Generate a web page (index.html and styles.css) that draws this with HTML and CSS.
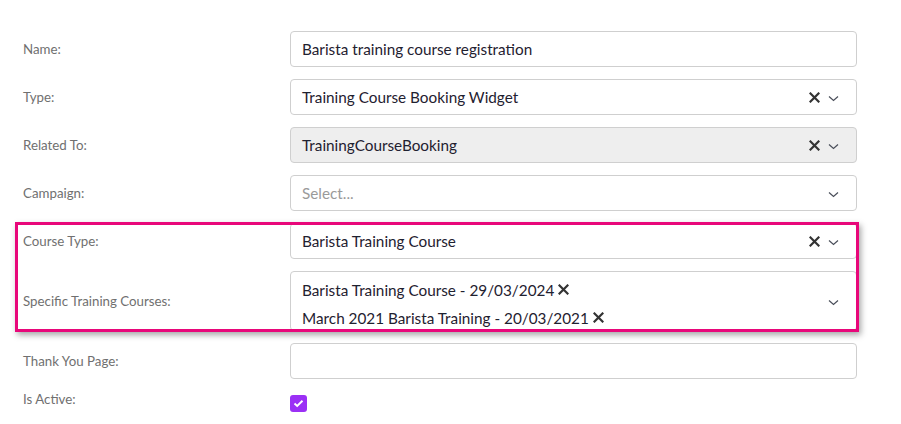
FILE: index.html
```html
<!DOCTYPE html>
<html>
<head>
<meta charset="utf-8">
<link rel="stylesheet" href="styles.css">
</head>
<body>
<div class="page">
  <form class="form">
    <div class="row">
      <label class="label">Name:</label>
      <div class="field"><span class="value">Barista training course registration</span></div>
    </div>
    <div class="row">
      <label class="label">Type:</label>
      <div class="field select"><span class="value">Training Course Booking Widget</span>
        <span class="icons">
          <svg class="clear" width="11" height="11" viewBox="0 0 11 11"><path d="M1.5 1.5L9.5 9.5M9.5 1.5L1.5 9.5" stroke="#333" stroke-width="2.2" stroke-linecap="square"/></svg>
          <svg class="chev" width="11" height="7" viewBox="0 0 11 7"><path d="M1 1.5L5.5 5.5L10 1.5" fill="none" stroke="#4a4f5a" stroke-width="1.2"/></svg>
        </span>
      </div>
    </div>
    <div class="row">
      <label class="label">Related To:</label>
      <div class="field select disabled"><span class="value">TrainingCourseBooking</span>
        <span class="icons">
          <svg class="clear" width="11" height="11" viewBox="0 0 11 11"><path d="M1.5 1.5L9.5 9.5M9.5 1.5L1.5 9.5" stroke="#333" stroke-width="2.2" stroke-linecap="square"/></svg>
          <svg class="chev" width="11" height="7" viewBox="0 0 11 7"><path d="M1 1.5L5.5 5.5L10 1.5" fill="none" stroke="#4a4f5a" stroke-width="1.2"/></svg>
        </span>
      </div>
    </div>
    <div class="row">
      <label class="label">Campaign:</label>
      <div class="field select"><span class="value placeholder">Select...</span>
        <span class="icons">
          <svg class="chev" width="11" height="7" viewBox="0 0 11 7"><path d="M1 1.5L5.5 5.5L10 1.5" fill="none" stroke="#4a4f5a" stroke-width="1.2"/></svg>
        </span>
      </div>
    </div>
    <div class="row">
      <label class="label">Course Type:</label>
      <div class="field select"><span class="value">Barista Training Course</span>
        <span class="icons">
          <svg class="clear" width="11" height="11" viewBox="0 0 11 11"><path d="M1.5 1.5L9.5 9.5M9.5 1.5L1.5 9.5" stroke="#333" stroke-width="2.2" stroke-linecap="square"/></svg>
          <svg class="chev" width="11" height="7" viewBox="0 0 11 7"><path d="M1 1.5L5.5 5.5L10 1.5" fill="none" stroke="#4a4f5a" stroke-width="1.2"/></svg>
        </span>
      </div>
    </div>
    <div class="row">
      <label class="label">Specific Training Courses:</label>
      <div class="field select multi">
        <div class="tags">
          <span class="tag">Barista Training Course - 29/03/2024<svg class="tagx" width="11" height="11" viewBox="0 0 11 11"><path d="M1.5 1.5L9.5 9.5M9.5 1.5L1.5 9.5" stroke="#333" stroke-width="2.2" stroke-linecap="square"/></svg></span>
          <span class="tag">March 2021 Barista Training - 20/03/2021<svg class="tagx" width="11" height="11" viewBox="0 0 11 11"><path d="M1.5 1.5L9.5 9.5M9.5 1.5L1.5 9.5" stroke="#333" stroke-width="2.2" stroke-linecap="square"/></svg></span>
        </div>
        <span class="icons">
          <svg class="chev" width="11" height="7" viewBox="0 0 11 7"><path d="M1 1.5L5.5 5.5L10 1.5" fill="none" stroke="#4a4f5a" stroke-width="1.2"/></svg>
        </span>
      </div>
    </div>
    <div class="row">
      <label class="label">Thank You Page:</label>
      <div class="field"></div>
    </div>
    <div class="row top">
      <label class="label">Is Active:</label>
      <span class="checkbox"><svg width="11" height="9" viewBox="0 0 11 9"><path d="M1.5 4.5L4.2 7L9.5 1.8" fill="none" stroke="#fff" stroke-width="1.9"/></svg></span>
    </div>
    <div class="row top">
      <label class="label">Show Form Title:</label>
    </div>
  </form>
  <div class="highlight"></div>
</div>
</body>
</html>
```
FILE: styles.css
```css
html, body {
  margin: 0;
  padding: 0;
  background: #fff;
  overflow: hidden;
}
body {
  font-family: Lato, "Open Sans", sans-serif;
  width: 901px;
  height: 424px;
}
.page {
  position: relative;
  width: 901px;
  height: 424px;
}
.form {
  display: flex;
  flex-direction: column;
  gap: 12px;
  padding-top: 31px;
}
.row {
  display: flex;
  align-items: center;
}
.row.top {
  align-items: flex-start;
}
.label {
  width: 267px;
  padding-left: 23px;
  font-size: 13.3px;
  color: #707070;
  line-height: 16px;
}
.field {
  box-sizing: border-box;
  width: 567px;
  height: 36px;
  border: 1px solid #cfcfcf;
  border-radius: 4px;
  padding: 0 17px 0 11px;
  display: flex;
  align-items: center;
  font-size: 15.3px;
  color: #1f2130;
}
.field.disabled {
  background: #eeeeee;
}
.value {
  flex: 1;
}
.placeholder {
  color: #9a9a9a;
}
.icons {
  display: flex;
  align-items: center;
  gap: 8px;
}
.chev {
  margin-top: 3px;
}
.field.multi {
  height: 60px;
}
.tags {
  flex: 1;
  display: flex;
  flex-direction: column;
  gap: 8px;
  padding-top: 5px;
}
.tag {
  display: flex;
  align-items: center;
  gap: 4px;
  line-height: 20px;
}
.checkbox {
  box-sizing: border-box;
  width: 17px;
  height: 17px;
  margin-top: 4px;
  border-radius: 3px;
  background: #9b30f5;
  display: flex;
  align-items: center;
  justify-content: center;
}
.highlight {
  position: absolute;
  box-sizing: border-box;
  left: 15px;
  top: 222px;
  width: 844px;
  height: 110px;
  border: 3px solid #e8077a;
  box-shadow: 2px 3px 6px rgba(0, 0, 0, 0.35);
  pointer-events: none;
}
```
